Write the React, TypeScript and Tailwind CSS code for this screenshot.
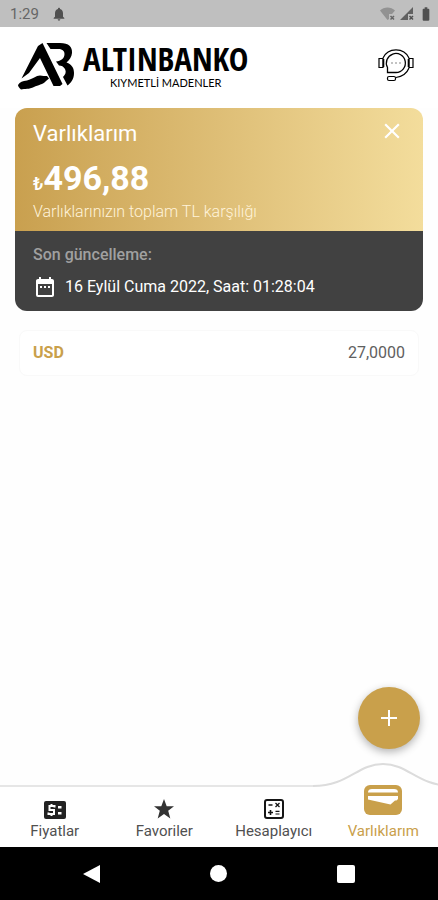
import React from "react";
import { MdBatteryFull, MdClose, MdDateRange, MdNotifications } from "react-icons/md";

interface Asset {
  code: string;
  amount: string;
}

interface Tab {
  id: string;
  label: string;
  icon: React.ReactNode;
}

const assets: Asset[] = [{ code: "USD", amount: "27,0000" }];

function BrandMark() {
  return (
    <svg viewBox="0 0 57 48" className="h-12 w-[57px]" fill="currentColor" aria-hidden="true">
      <path d="M20 3 24.500 0 44.500 41 42 43H35.500L22 15 11 30 3.500 35.500Z" />
      <path d="M28.500 0H42C51 0 54.500 4 54 10 53.700 14 51.500 17 48.500 19.500 54 21.500 56 25 56 30 56 36 53 40 49.500 42.500L45 34C47.500 31.500 48.500 29 47 26 45.500 23.500 43.500 22.500 41 22.500L38 18.500C43 18 46.500 15.500 46.500 11 46.500 7.500 44 6 40 6H32.500Z" />
      <path d="M0 42C2 39 4.500 38 9 37.500 15 36 18 32.500 22 32.500 25 33 26 33 29 33L31 35.500 28 38C25 41.500 20 42 16 44 11 46.500 7 45.500 3 46.500 1 45 0 43 0 42Z" />
    </svg>
  );
}

function HeadsetIcon() {
  return (
    <svg viewBox="0 0 36 34" className="h-[34px] w-9" fill="none" stroke="currentColor" aria-hidden="true">
      <path d="M5 9C7.500 3.500 12 .8 18 .8S28.500 3.500 31 9M31 19C29 24 25 27.500 18 28.500" strokeWidth="1.200" />
      <path d="M9.500 23.500V18.500A9.500 9.500 0 1 1 18 23.500Z" strokeWidth="1.300" />
      <path d="M1 9.500H5V18.500H1ZM31 9.500H35V18.500H31Z" strokeWidth="1.200" />
      <path d="M5.500 10V18M30.500 10V18" strokeWidth="1.600" />
      <rect x="9.500" y="27.500" width="8" height="4" rx="1.500" strokeWidth="1.200" />
      <path d="M13 14H23.500" stroke="#888" strokeWidth="1.200" strokeDasharray="2 2" />
    </svg>
  );
}

function PriceIcon() {
  return (
    <svg viewBox="0 0 22 18" className="h-[18px] w-[22px]" aria-hidden="true">
      <rect width="22" height="18" rx="2" fill="#222" />
      <path d="M10.500 6.500V5H5.500V9H10V13H4.500V11.500M7.500 3V5M7.500 13V15" fill="none" stroke="#fff" strokeWidth="2" />
      <path d="M14 5H17.500V7.500H14ZM14 11H17.500V13.500H14Z" fill="#fff" />
    </svg>
  );
}

function StarIcon() {
  return (
    <svg viewBox="0 0 20 20" className="size-5" fill="#333" aria-hidden="true">
      <path d="M10 0 12.700 7.200H20L14.200 11.800 16.300 19.500 10 15 3.700 19.500 5.800 11.800 0 7.200H7.300Z" />
    </svg>
  );
}

function CalculatorIcon() {
  return (
    <svg viewBox="0 0 20 20" className="size-5" fill="none" stroke="#151515" aria-hidden="true">
      <rect x="1" y="1" width="18" height="18" rx="2" strokeWidth="2" />
      <path d="M4.500 6H8.500M11.500 4 15.500 8M15.500 4 11.500 8" strokeWidth="1.300" />
      <path d="M4 13.500H9M6.500 11V16" strokeWidth="1.600" />
      <path d="M11.500 12.300H15.500M11.500 15H15.500" strokeWidth="1.200" />
    </svg>
  );
}

function WalletIcon() {
  return (
    <svg viewBox="0 0 38 30" className="h-[30px] w-[38px]" aria-hidden="true">
      <rect width="38" height="30" rx="6" fill="#c9a04b" />
      <path d="M4 7.500C4 5 5.500 4 8 4H30C32.500 4 34 5 34 7.500Z" fill="#fff" />
      <path d="M4 11H34V14L32.500 15.500H31L26.500 19.500 4 14.500Z" fill="#fff" />
    </svg>
  );
}

const tabs: Tab[] = [
  { id: "prices", label: "Fiyatlar", icon: <PriceIcon /> },
  { id: "favorites", label: "Favoriler", icon: <StarIcon /> },
  { id: "calculator", label: "Hesaplayıcı", icon: <CalculatorIcon /> },
  { id: "assets", label: "Varlıklarım", icon: <WalletIcon /> },
];

function StatusBar() {
  return (
    <div className="flex h-[27px] items-center justify-between bg-[#bfbfbf] pr-1 pl-2.5 text-[#666]">
      <div className="flex items-center gap-3">
        <span className="text-[15px] leading-5">1:29</span>
        <MdNotifications className="size-4 text-[#505050]" />
      </div>
      <div className="flex items-center gap-1">
        <svg viewBox="0 0 16 14" className="h-3.5 w-4" aria-hidden="true">
          <path d="M0 3.500C4-.5 11-.5 15 3.500L12 7H9V12L7.500 13Z" fill="#929292" />
          <path d="M10.500 9 14 12.500M14 9 10.500 12.500" stroke="#666" strokeWidth="1.500" />
        </svg>
        <svg viewBox="0 0 14 14" className="size-3.5" aria-hidden="true">
          <path d="M0 13 13 0V7H8V13Z" fill="#606060" />
          <path d="M9.500 9 13 12.500M13 9 9.500 12.500" stroke="#505050" strokeWidth="1.500" />
        </svg>
        <MdBatteryFull className="size-4 text-[#505050]" />
      </div>
    </div>
  );
}

function Header() {
  return (
    <header className="flex h-[81px] items-start justify-between bg-white pt-4 pr-6 pl-[18px] text-black">
      <div className="flex items-start gap-2">
        <BrandMark />
        <div className="flex flex-col items-center">
          <span className="font-['Liberation_Sans_Narrow','Open_Sans_Condensed',Roboto,sans-serif] text-[33px] leading-8 font-bold">
            ALTINBANKO
          </span>
          <span className="font-[Lato,sans-serif] text-[11px] leading-4">KIYMETLİ MADENLER</span>
        </div>
      </div>
      <button type="button" aria-label="Destek" className="pt-1.5">
        <HeadsetIcon />
      </button>
    </header>
  );
}

function SummaryCard() {
  return (
    <section className="overflow-hidden rounded-xl">
      <div className="h-[123px] bg-linear-to-r from-[#c9a04f] to-[#f3dd9c] px-[18px] pt-2.5 text-white">
        <div className="flex h-8 items-start justify-between">
          <h1 className="text-[22px] leading-8">Varlıklarım</h1>
          <button type="button" aria-label="Kapat">
            <MdClose className="size-[26px]" />
          </button>
        </div>
        <p className="h-12 pt-2 leading-10 font-bold">
          <span className="text-lg font-medium">₺</span>
          <span className="text-[34px]">496,88</span>
        </p>
        <p className="pt-1 text-base leading-5 font-light text-[#fff3da]">Varlıklarınızın toplam TL karşılığı</p>
      </div>
      <div className="h-20 bg-[#414141] px-[18px] pt-3.5">
        <p className="text-base leading-5 font-medium text-[#a0a0a0]">Son güncelleme:</p>
        <p className="flex items-center gap-2 pt-2 text-base leading-7 text-white">
          <MdDateRange className="size-6" />
          16 Eylül Cuma 2022, Saat: 01:28:04
        </p>
      </div>
    </section>
  );
}

function BottomNav() {
  return (
    <nav className="relative grid h-[62px] grid-cols-4 border-t-2 border-[#e6e6e6] bg-white">
      {tabs.map((tab) => {
        const active = tab.id === "assets";
        return (
          <button
            key={tab.id}
            type="button"
            aria-current={active ? "page" : undefined}
            className={
              active
                ? "relative flex flex-col items-center justify-end gap-2 pb-2 text-[15px] leading-4 text-[#c9a04b]"
                : "flex flex-col items-center justify-end gap-1 pb-2 text-[15px] leading-4 text-[#505050]"
            }
          >
            {active && (
              // Raised hump behind the selected tab
              <svg viewBox="0 0 140 30" className="absolute -top-6 left-1/2 h-[30px] w-[140px] -translate-x-1/2" aria-hidden="true">
                <path d="M0 23C36 23 44 1 70 1S104 23 140 23V30H0Z" fill="#fff" />
                <path d="M0 23C36 23 44 1 70 1S104 23 140 23" fill="none" stroke="#dcdcdc" strokeWidth="2" />
              </svg>
            )}
            <span className="relative flex h-5 items-end">{tab.icon}</span>
            <span className="relative">{tab.label}</span>
          </button>
        );
      })}
    </nav>
  );
}

function SystemNav() {
  return (
    <div className="flex h-[53px] items-center justify-around bg-black px-7 text-white">
      <button type="button" aria-label="Geri">
        <svg viewBox="0 0 18 18" className="size-[18px]" fill="currentColor" aria-hidden="true">
          <path d="M17 0V18L0 9Z" />
        </svg>
      </button>
      <button type="button" aria-label="Ana ekran" className="size-[17px] rounded-full bg-white" />
      <button type="button" aria-label="Son uygulamalar" className="size-[18px] rounded-xs bg-white" />
    </div>
  );
}

export default function App() {
  return (
    <div className="flex min-h-screen flex-col overflow-x-hidden bg-[#fefefe] font-[Roboto,sans-serif]">
      <StatusBar />
      <Header />
      <main className="relative flex-1 px-[15px]">
        <SummaryCard />
        <ul className="flex flex-col gap-2 px-1 pt-[19px]">
          {assets.map((asset) => (
            <li
              key={asset.code}
              className="flex h-[46px] items-center justify-between rounded-lg border border-[#f9f9f9] bg-white px-[13px] text-base"
            >
              <span className="font-bold text-[#c9a04b]">{asset.code}</span>
              <span className="text-[#606060]">{asset.amount}</span>
            </li>
          ))}
        </ul>
        <button
          type="button"
          aria-label="Varlık ekle"
          className="absolute right-[18px] bottom-9 flex size-[62px] items-center justify-center rounded-full bg-[#c9a04b] text-white shadow-[0_3px_8px_rgba(0,0,0,0.3)]"
        >
          <svg viewBox="0 0 16 16" className="size-4" stroke="currentColor" strokeWidth="2" aria-hidden="true">
            <path d="M8 0V16M0 8H16" />
          </svg>
        </button>
      </main>
      <BottomNav />
      <SystemNav />
    </div>
  );
}
